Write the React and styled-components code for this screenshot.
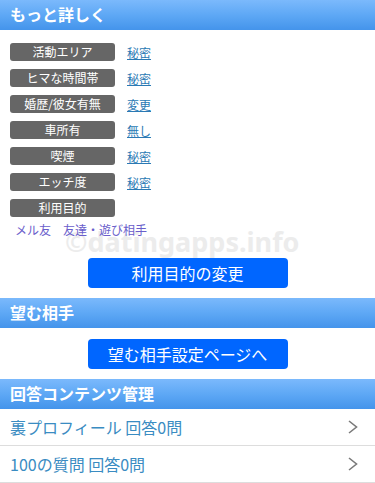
import React from 'react'
import styled, { createGlobalStyle } from 'styled-components'

const GlobalStyle = createGlobalStyle`
  body {
    margin: 0;
    background: #fff;
    font-family: "Noto Sans CJK JP", "Noto Sans", sans-serif;
  }
`

const details = [
  { name: '活動エリア', value: '秘密' },
  { name: 'ヒマな時間帯', value: '秘密' },
  { name: '婚歴/彼女有無', value: '変更' },
  { name: '車所有', value: '無し' },
  { name: '喫煙', value: '秘密' },
  { name: 'エッチ度', value: '秘密' },
  { name: '利用目的' }
]

const answers = ['裏プロフィール 回答0問', '100の質問 回答0問']

const App = () => (
  <Page>
    <GlobalStyle />
    <SectionHeader>もっと詳しく</SectionHeader>
    <DetailBlock>
      <Watermark>©datingapps.info</Watermark>
      {details.map(d => (
        <DetailRow key={d.name}>
          <Label>{d.name}</Label>
          {d.value && <ValueLink href="#">{d.value}</ValueLink>}
        </DetailRow>
      ))}
      <Purpose>メル友　友達・遊び相手</Purpose>
      <ButtonRow $pad="12px 0 0">
        <BlueButton>利用目的の変更</BlueButton>
      </ButtonRow>
    </DetailBlock>
    <SectionHeader>望む相手</SectionHeader>
    <ButtonRow $pad="11px 0 10px">
      <BlueButton>望む相手設定ページへ</BlueButton>
    </ButtonRow>
    <SectionHeader>回答コンテンツ管理</SectionHeader>
    <AnswerList>
      {answers.map(a => (
        <AnswerItem key={a}>
          <span>{a}</span>
          <svg width="12" height="16" viewBox="0 0 12 16">
            <path d="M2 2 L9.5 8 L2 14" fill="none" stroke="#7a7a7a" strokeWidth="1.6" />
          </svg>
        </AnswerItem>
      ))}
    </AnswerList>
  </Page>
)

export default App

/* Styled */
const Page = styled.div`
  width: 375px;
  overflow: hidden;
`

const SectionHeader = styled.h2`
  margin: 0;
  height: 30px;
  line-height: 29px;
  padding: 0 10px;
  font-size: 16px;
  font-weight: bold;
  color: #fff;
  background: linear-gradient(to bottom, #7bb9fc 0%, #5ea8f5 50%, #4494eb 100%);
`

const DetailBlock = styled.div`
  position: relative;
  padding: 13px 10px 10px;
  display: flex;
  flex-direction: column;
  gap: 8px;
`

const DetailRow = styled.div`
  display: flex;
  align-items: center;
  gap: 12px;
  height: 18px;
`

const Label = styled.span`
  width: 105px;
  height: 18px;
  line-height: 18px;
  border-radius: 3px;
  background: #666;
  color: #fff;
  font-size: 12px;
  text-align: center;
`

const ValueLink = styled.a`
  font-size: 12px;
  color: #2a79b4;
  text-decoration: underline;
`

const Purpose = styled.div`
  position: relative;
  margin-top: -3px;
  padding-left: 5px;
  font-size: 12px;
  color: #6a5ecb;
  line-height: 16px;
`

const Watermark = styled.div`
  position: absolute;
  left: 65px;
  top: 193px;
  font-family: "Noto Sans", sans-serif;
  font-size: 27px;
  font-weight: bold;
  color: #ececec;
  pointer-events: none;
`

const ButtonRow = styled.div`
  position: relative;
  display: flex;
  justify-content: center;
  padding: ${p => p.$pad};
`

const BlueButton = styled.button`
  width: 200px;
  height: 30px;
  border: none;
  border-radius: 4px;
  background: #0066ff;
  color: #fff;
  font-family: inherit;
  font-size: 16px;
  padding: 0;
`

const AnswerList = styled.ul`
  list-style: none;
  margin: 0;
  padding: 0;
`

const AnswerItem = styled.li`
  display: flex;
  align-items: center;
  justify-content: space-between;
  height: 36px;
  padding: 0 16px 0 10px;
  font-size: 16px;
  color: #3a8cc2;
  border-bottom: 1px solid #ddd;
`
